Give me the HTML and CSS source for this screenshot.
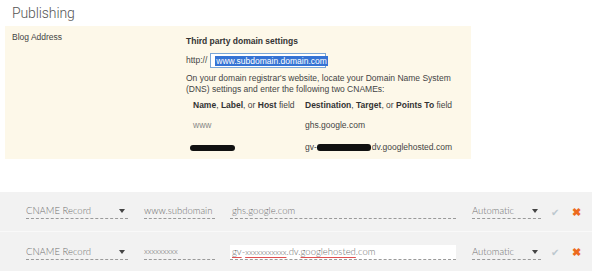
FILE: index.html
```html
<!DOCTYPE html>
<html>
<head>
<meta charset="utf-8">
<link rel="stylesheet" href="styles.css">
</head>
<body>
<h1 class="title">Publishing</h1>
<section class="settings">
  <div class="label">Blog Address</div>
  <div class="content">
    <h2 class="heading">Third party domain settings</h2>
    <div class="url-row">
      <span class="proto">http://</span>
      <span class="url-input"><span class="sel">www.subdomain.domain.com</span></span>
    </div>
    <p class="desc">On your domain registrar's website, locate your Domain Name System (DNS) settings and enter the following two CNAMEs:</p>
    <div class="cname-table">
      <div class="c-name"><b>Name</b>, <b>Label</b>, or <b>Host</b> field</div>
      <div class="c-dest"><b>Destination</b>, <b>Target</b>, or <b>Points To</b> field</div>
      <div class="c-name muted">www</div>
      <div class="c-dest">ghs.google.com</div>
      <div class="c-name"><span class="redact r1"></span></div>
      <div class="c-dest">gv-<span class="redact r2"></span>dv.googlehosted.com</div>
    </div>
  </div>
</section>

<section class="records">
  <div class="record">
    <div class="field f-type">CNAME Record<span class="caret"></span></div>
    <div class="field f-host">www.subdomain</div>
    <div class="field f-value">ghs.google.com</div>
    <div class="field f-ttl">Automatic<span class="caret"></span></div>
    <span class="ok">&#10004;</span>
    <span class="del">&#10006;</span>
  </div>
  <div class="record">
    <div class="field f-type">CNAME Record<span class="caret"></span></div>
    <div class="field f-host xs">xxxxxxxxx</div>
    <div class="field f-value editing"><span class="sp">gv</span>-<span class="sp xs">xxxxxxxxxxx</span>.dv.<span class="sp">googlehosted</span>.com</div>
    <div class="field f-ttl">Automatic<span class="caret"></span></div>
    <span class="ok">&#10004;</span>
    <span class="del">&#10006;</span>
  </div>
</section>
</body>
</html>
```

FILE: styles.css
```css
* { box-sizing: border-box; }
html, body { margin: 0; padding: 0; background: #fff; }
body { width: 600px; height: 272px; overflow: hidden; }

.title {
  margin: 0;
  padding: 3px 0 0 12px;
  height: 26px;
  font-family: Roboto, "Open Sans", sans-serif;
  font-weight: 300;
  font-size: 14px;
  letter-spacing: -0.1px;
  color: #555;
  line-height: 20px;
}

.settings {
  margin-left: 5px;
  width: 466px;
  height: 133px;
  background: #fdf8e9;
  display: flex;
  font-family: "Liberation Sans", Arial, sans-serif;
  font-size: 8.5px;
  color: #444;
}
.label {
  width: 181px;
  padding: 6px 0 0 7px;
  color: #444;
}
.content { padding-top: 10px; }
.heading {
  margin: 0;
  font-size: 8.5px;
  font-weight: bold;
  color: #333;
  line-height: 11px;
}
.url-row {
  display: flex;
  align-items: center;
  gap: 3px;
  margin-top: 5px;
  height: 16px;
}
.url-input {
  width: 116px;
  height: 15px;
  border: 1px solid #7aa6d6;
  background: #fff;
  padding: 1px 2px 0 4px;
  display: flex;
  align-items: center;
}
.sel {
  background: #3573d4;
  color: #fff;
  line-height: 10px;
  padding: 0 1px;
}
.desc {
  margin: 5px 0 0;
  width: 270px;
  line-height: 11px;
  color: #444;
}
.cname-table {
  display: grid;
  grid-template-columns: 112px auto;
  grid-template-rows: 16px 24px 20px;
  margin: 2px 0 0 7px;
  align-items: center;
}
.cname-table b { color: #333; }
.muted { color: #888; }
.redact {
  display: inline-block;
  background: #111;
  border-radius: 3px;
  vertical-align: middle;
}
.r1 { width: 45px; height: 6px; margin-left: -3px; }
.r2 { width: 54px; height: 7px; margin: 0 1px 0 0; }

.records {
  margin-top: 33px;
  width: 592px;
  height: 79px;
  background: #f2f2f2;
  font-family: Lato, "Open Sans", sans-serif;
  font-weight: 300;
  font-size: 9.5px;
  color: #707070;
}
.record {
  height: 40px;
  display: flex;
  align-items: center;
  padding-left: 26px;
  border-bottom: 1px solid #f9f9f9;
}
.record:last-child { border-bottom: 0; }
.field {
  position: relative;
  height: 15px;
  line-height: 13px;
  border-bottom: 1px dashed #9a9a9a;
  white-space: nowrap;
}
.f-type { width: 102px; margin-right: 16px; }
.f-host { width: 71px; margin-right: 15px; }
.f-value { width: 226px; margin-right: 16px; padding-left: 2px; }
.f-ttl { width: 69px; margin-right: 10px; }
.editing { background: #fff; }
.xs { font-size: 8px; }
.sp { text-decoration: underline; text-decoration-color: #e05050; text-underline-offset: 2px; }
.caret {
  position: absolute;
  right: 3px;
  top: 5px;
  width: 0; height: 0;
  border-left: 3.5px solid transparent;
  border-right: 3.5px solid transparent;
  border-top: 4px solid #444;
}
.ok { color: #bcc8cf; font-size: 10px; width: 21px; }
.del { color: #ec6a1f; font-size: 11px; font-weight: bold; }
```
